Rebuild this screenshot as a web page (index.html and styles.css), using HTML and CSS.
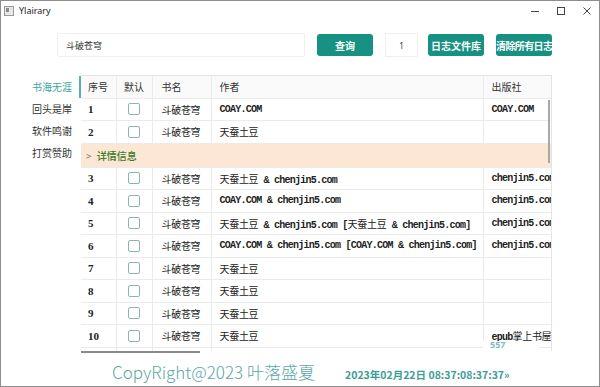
FILE: index.html
```html
<!DOCTYPE html>
<html lang="zh-CN">
<head>
  <meta charset="UTF-8" />
  <title>Ylairary</title>
  <link rel="stylesheet" href="styles.css">
</head>
<body>
  <div class="window">

    <div class="titlebar">
      <svg class="app-icon" width="10" height="10" viewBox="0 0 10 10">
        <rect x="0.5" y="0.5" width="9" height="9" fill="#e8e8e8" stroke="#9a9a9a"/>
        <rect x="2" y="2" width="3" height="4" fill="#8c8c8c"/>
      </svg>
      <span class="app-title">Ylairary</span>
      <div class="win-ctrls">
        <svg width="10" height="10" viewBox="0 0 10 10"><path d="M1 5.5h8" stroke="#444" stroke-width="1"/></svg>
        <svg width="10" height="10" viewBox="0 0 10 10"><rect x="1.5" y="1.5" width="7" height="7" fill="none" stroke="#444"/></svg>
        <svg width="10" height="10" viewBox="0 0 10 10"><path d="M1.5 1.5l7 7M8.5 1.5l-7 7" stroke="#444" stroke-width="1"/></svg>
      </div>
    </div>

    <div class="toolbar">
      <input class="search" type="text" value="斗破苍穹">
      <button class="btn btn-query">查询</button>
      <input class="page" type="text" value="1">
      <button class="btn">日志文件库</button>
      <button class="btn btn-clear">清除所有日志</button>
    </div>

    <div class="main">
      <nav class="side">
        <a class="active">书海无涯</a>
        <a>回头是岸</a>
        <a>软件鸣谢</a>
        <a>打赏赞助</a>
      </nav>

      <div class="grid-wrap">
        <table class="books">
          <colgroup>
            <col class="c-no"><col class="c-def"><col class="c-name"><col class="c-author"><col class="c-pub">
          </colgroup>
          <thead>
            <tr><th>序号</th><th>默认</th><th>书名</th><th>作者</th><th>出版社</th></tr>
          </thead>
          <tbody>
            <tr><td class="no">1</td><td><span class="check"></span></td><td class="zh">斗破苍穹</td><td>COAY.COM</td><td>COAY.COM</td></tr>
            <tr><td class="no">2</td><td><span class="check"></span></td><td class="zh">斗破苍穹</td><td class="zh">天蚕土豆</td><td></td></tr>
            <tr class="detail"><td colspan="5"><span class="arrow">&gt;</span> 详情信息</td></tr>
            <tr><td class="no">3</td><td><span class="check"></span></td><td class="zh">斗破苍穹</td><td><span class="zh">天蚕土豆</span> &amp; chenjin5.com</td><td>chenjin5.com</td></tr>
            <tr><td class="no">4</td><td><span class="check"></span></td><td class="zh">斗破苍穹</td><td>COAY.COM &amp; chenjin5.com</td><td>chenjin5.com</td></tr>
            <tr><td class="no">5</td><td><span class="check"></span></td><td class="zh">斗破苍穹</td><td><span class="zh">天蚕土豆</span> &amp; chenjin5.com [<span class="zh">天蚕土豆</span> &amp; chenjin5.com]</td><td>chenjin5.com</td></tr>
            <tr><td class="no">6</td><td><span class="check"></span></td><td class="zh">斗破苍穹</td><td>COAY.COM &amp; chenjin5.com [COAY.COM &amp; chenjin5.com]</td><td>chenjin5.com</td></tr>
            <tr><td class="no">7</td><td><span class="check"></span></td><td class="zh">斗破苍穹</td><td class="zh">天蚕土豆</td><td></td></tr>
            <tr><td class="no">8</td><td><span class="check"></span></td><td class="zh">斗破苍穹</td><td class="zh">天蚕土豆</td><td></td></tr>
            <tr><td class="no">9</td><td><span class="check"></span></td><td class="zh">斗破苍穹</td><td class="zh">天蚕土豆</td><td></td></tr>
            <tr><td class="no">10</td><td><span class="check"></span></td><td class="zh">斗破苍穹</td><td class="zh">天蚕土豆</td><td>epub<span class="zh">掌上书屋</span></td></tr>
            <tr><td class="no">11</td><td><span class="check"></span></td><td class="zh">斗破苍穹</td><td class="zh">天蚕土豆</td><td></td></tr>
          </tbody>
        </table>
        <div class="vscroll"></div>
        <div class="stray">557</div>
      </div>
    </div>

    <div class="hscroll"></div>

    <footer class="footer">
      <span class="copy">CopyRight@2023 叶落盛夏</span>
      <span class="clock">2023年02月22日 08:37:08:37:37»</span>
    </footer>

  </div>
</body>
</html>
```

FILE: styles.css
```css
* { box-sizing: border-box; }
html, body {
  margin: 0;
  background: #fff;
}
body {
  font-family: "Noto Sans CJK SC", "Noto Sans", sans-serif;
  color: #333;
}
.window {
  position: relative;
  width: 600px;
  height: 387px;
  border: 1px solid #8e8e8e;
  overflow: hidden;
  background: #fff;
}

/* Title bar */
.titlebar {
  height: 21px;
  display: flex;
  align-items: center;
  padding-left: 3px;
}
.app-icon { margin-top: -2px; }
.app-title {
  font-family: "Noto Sans", sans-serif;
  font-size: 9px;
  color: #222;
  margin-left: 5px;
  margin-top: -2px;
}
.win-ctrls {
  margin-left: auto;
  display: flex;
  gap: 16px;
  padding-right: 7px;
  margin-top: -2px;
}

/* Toolbar */
.toolbar {
  display: flex;
  align-items: center;
  height: 24px;
  margin-top: 11px;
  padding-left: 56px;
}
.search {
  width: 248px;
  height: 24px;
  border: 1px solid #f0f0f0;
  border-radius: 2px;
  padding: 0 8px;
  font-family: "Noto Sans CJK SC", sans-serif;
  font-size: 9px;
  color: #333;
  outline: none;
}
.btn {
  width: 56px;
  height: 22px;
  border: none;
  border-radius: 3px;
  background: #179282;
  color: #fff;
  font-family: "Noto Sans CJK SC", sans-serif;
  font-size: 10px;
  font-weight: bold;
  padding: 0;
  white-space: nowrap;
  overflow: hidden;
}
.btn-query { margin-left: 12px; }
.btn-clear {
  margin-left: 12px;
  letter-spacing: -0.6px;
}
.page {
  width: 33px;
  height: 24px;
  margin: 0 10px 0 12px;
  border: 1px solid #f0f0f0;
  text-align: center;
  font-family: "Noto Sans", sans-serif;
  font-size: 8px;
  color: #333;
  outline: none;
}

/* Main area */
.main {
  display: flex;
  margin-top: 18px;
}
.side {
  width: 80px;
  flex: none;
  padding-top: 1px;
}
.side a {
  display: block;
  height: 22px;
  line-height: 22px;
  padding-left: 31px;
  font-size: 10px;
  color: #333;
  border-right: 2px solid transparent;
}
.side a.active {
  color: #3ea59c;
  border-right-color: #5ab0a8;
}

.grid-wrap {
  position: relative;
  width: 471px;
  height: 276px;
  overflow: hidden;
  border-top: 1px solid #e4e4e4;
  border-right: 1px solid #e4e4e4;
}
.books {
  width: 471px;
  table-layout: fixed;
  border-collapse: collapse;
  font-family: "Liberation Mono", monospace;
  font-size: 10px;
  letter-spacing: -0.75px;
  font-weight: bold;
  color: #222;
}
.books .zh {
  font-family: "Noto Sans CJK SC", sans-serif;
  font-weight: normal;
  letter-spacing: -0.3px;
  color: #222;
}
.c-no { width: 35px; }
.c-def { width: 36px; }
.c-name { width: 59px; }
.c-author { width: 272px; }
.c-pub { width: 69px; }

.books th, .books td {
  height: 22.5px;
  padding: 0 0 0 8px;
  text-align: left;
  white-space: nowrap;
  overflow: hidden;
  border-bottom: 1px solid #ebebeb;
  border-left: 1px solid #ebebeb;
}
.books th {
  height: 22px;
  background: #fafafa;
  font-family: "Noto Sans CJK SC", sans-serif;
  font-weight: normal;
  letter-spacing: 0;
  font-size: 10px;
  color: #333;
}
.books th:first-child, .books td:first-child { border-left: none; padding-left: 7px; }
.books td:nth-child(2), .books th:nth-child(2) { padding-left: 0; text-align: center; }
.books td:nth-child(3), .books th:nth-child(3) { padding-left: 9px; }
.books td.no { font-family: "Liberation Serif", serif; font-weight: bold; letter-spacing: 0; font-size: 11px; }

.check {
  display: inline-block;
  width: 12px;
  height: 12px;
  border: 1px solid #8fb3b3;
  border-radius: 2px;
  vertical-align: middle;
  margin-left: -1px;
}

.books tr.detail td {
  height: 24px;
  background: #fce7d4;
  padding-left: 5px;
  font-family: "Noto Sans CJK SC", sans-serif;
  letter-spacing: 0;
  font-size: 10px;
  font-weight: 500;
  color: #3a7a2a;
}
.arrow {
  color: #777;
  font-weight: normal;
  margin-right: 3px;
}

.vscroll {
  position: absolute;
  top: 24px;
  right: 1px;
  width: 2px;
  height: 63px;
  background: #a8a8a8;
}
.stray {
  position: absolute;
  left: 402px;
  top: 265px;
  width: 56px;
  height: 12px;
  background: #fff;
  padding-left: 7px;
  font-family: "Noto Sans", sans-serif;
  font-size: 9px;
  line-height: 8px;
  font-weight: bold;
  color: #7fbcbc;
}

.hscroll {
  width: 119px;
  height: 2px;
  margin-left: 80px;
  background: #8a8a8a;
}

/* Footer */
.footer {
  display: flex;
  align-items: baseline;
  padding-left: 111px;
  margin-top: 6px;
}
.copy {
  font-size: 17px;
  font-weight: 300;
  color: #5aa8a6;
  width: 233px;
  flex: none;
}
.clock {
  font-size: 10.5px;
  font-weight: bold;
  color: #3d9d97;
  width: 168px;
  white-space: nowrap;
  overflow: hidden;
}
```
